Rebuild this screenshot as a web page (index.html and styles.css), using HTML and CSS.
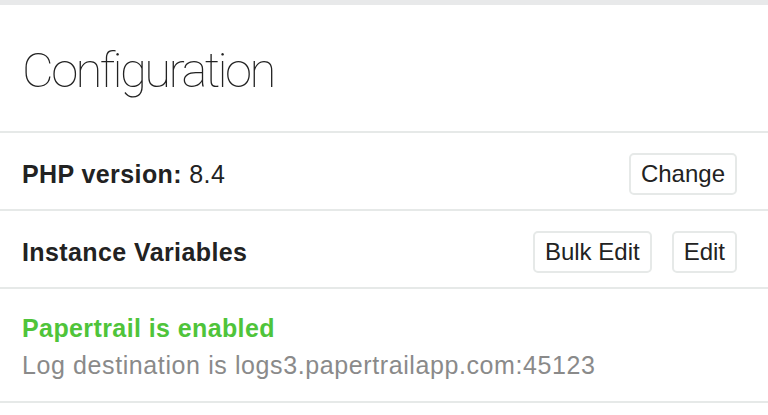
FILE: index.html
```html
<!DOCTYPE html>
<html>
<head>
<meta charset="utf-8">
<link rel="stylesheet" href="styles.css">
</head>
<body>
<div class="panel">
  <div class="panel-header">
    <h1 class="title">Configuration</h1>
  </div>
  <div class="row">
    <div class="label"><strong>PHP version:</strong> 8.4</div>
    <div class="actions"><button class="btn">Change</button></div>
  </div>
  <div class="row">
    <div class="label"><strong>Instance Variables</strong></div>
    <div class="actions"><button class="btn">Bulk Edit</button><button class="btn">Edit</button></div>
  </div>
  <div class="status">
    <div class="status-title">Papertrail is enabled</div>
    <div class="status-text">Log destination is logs3.papertrailapp.com:45123</div>
  </div>
</div>
</body>
</html>
```
FILE: styles.css
```css
html, body {
  margin: 0;
  padding: 0;
  background: #fff;
}
body {
  font-family: "Liberation Sans", Arial, sans-serif;
  color: #222;
}
.panel {
  border-top: 5px solid #e8e9ea;
  border-bottom: 2px solid #e6e9e8;
}
.panel-header {
  padding: 0 22px;
  height: 126px;
  display: flex;
  align-items: center;
  border-bottom: 2px solid #e6e9e8;
}
.title {
  margin: 0;
  font-family: "Roboto", "Inter", sans-serif;
  font-weight: 100;
  font-size: 49px;
  letter-spacing: -2.6px;
  color: #222;
  padding-top: 4px;
}
.row {
  display: flex;
  align-items: center;
  justify-content: space-between;
  padding: 20px 31px 14px 22px;
  border-bottom: 2px solid #e6e9e8;
}
.label {
  font-size: 25px;
  letter-spacing: 0.4px;
}
.label strong {
  font-weight: 700;
}
.actions {
  display: flex;
  gap: 20px;
}
.btn {
  font-family: "Liberation Sans", Arial, sans-serif;
  font-size: 24px;
  color: #222;
  background: #fff;
  border: 2px solid #e6e9e8;
  border-radius: 5px;
  height: 42px;
  padding: 0 10px;
  margin: 0;
}
.status {
  padding: 24px 22px 14px;
  height: 74px;
}
.status-title {
  color: #4fc43a;
  font-weight: 700;
  font-size: 25px;
  letter-spacing: 0.4px;
  line-height: 30px;
}
.status-text {
  color: #8a8a8a;
  font-size: 25px;
  letter-spacing: 0.6px;
  line-height: 44px;
}
```
